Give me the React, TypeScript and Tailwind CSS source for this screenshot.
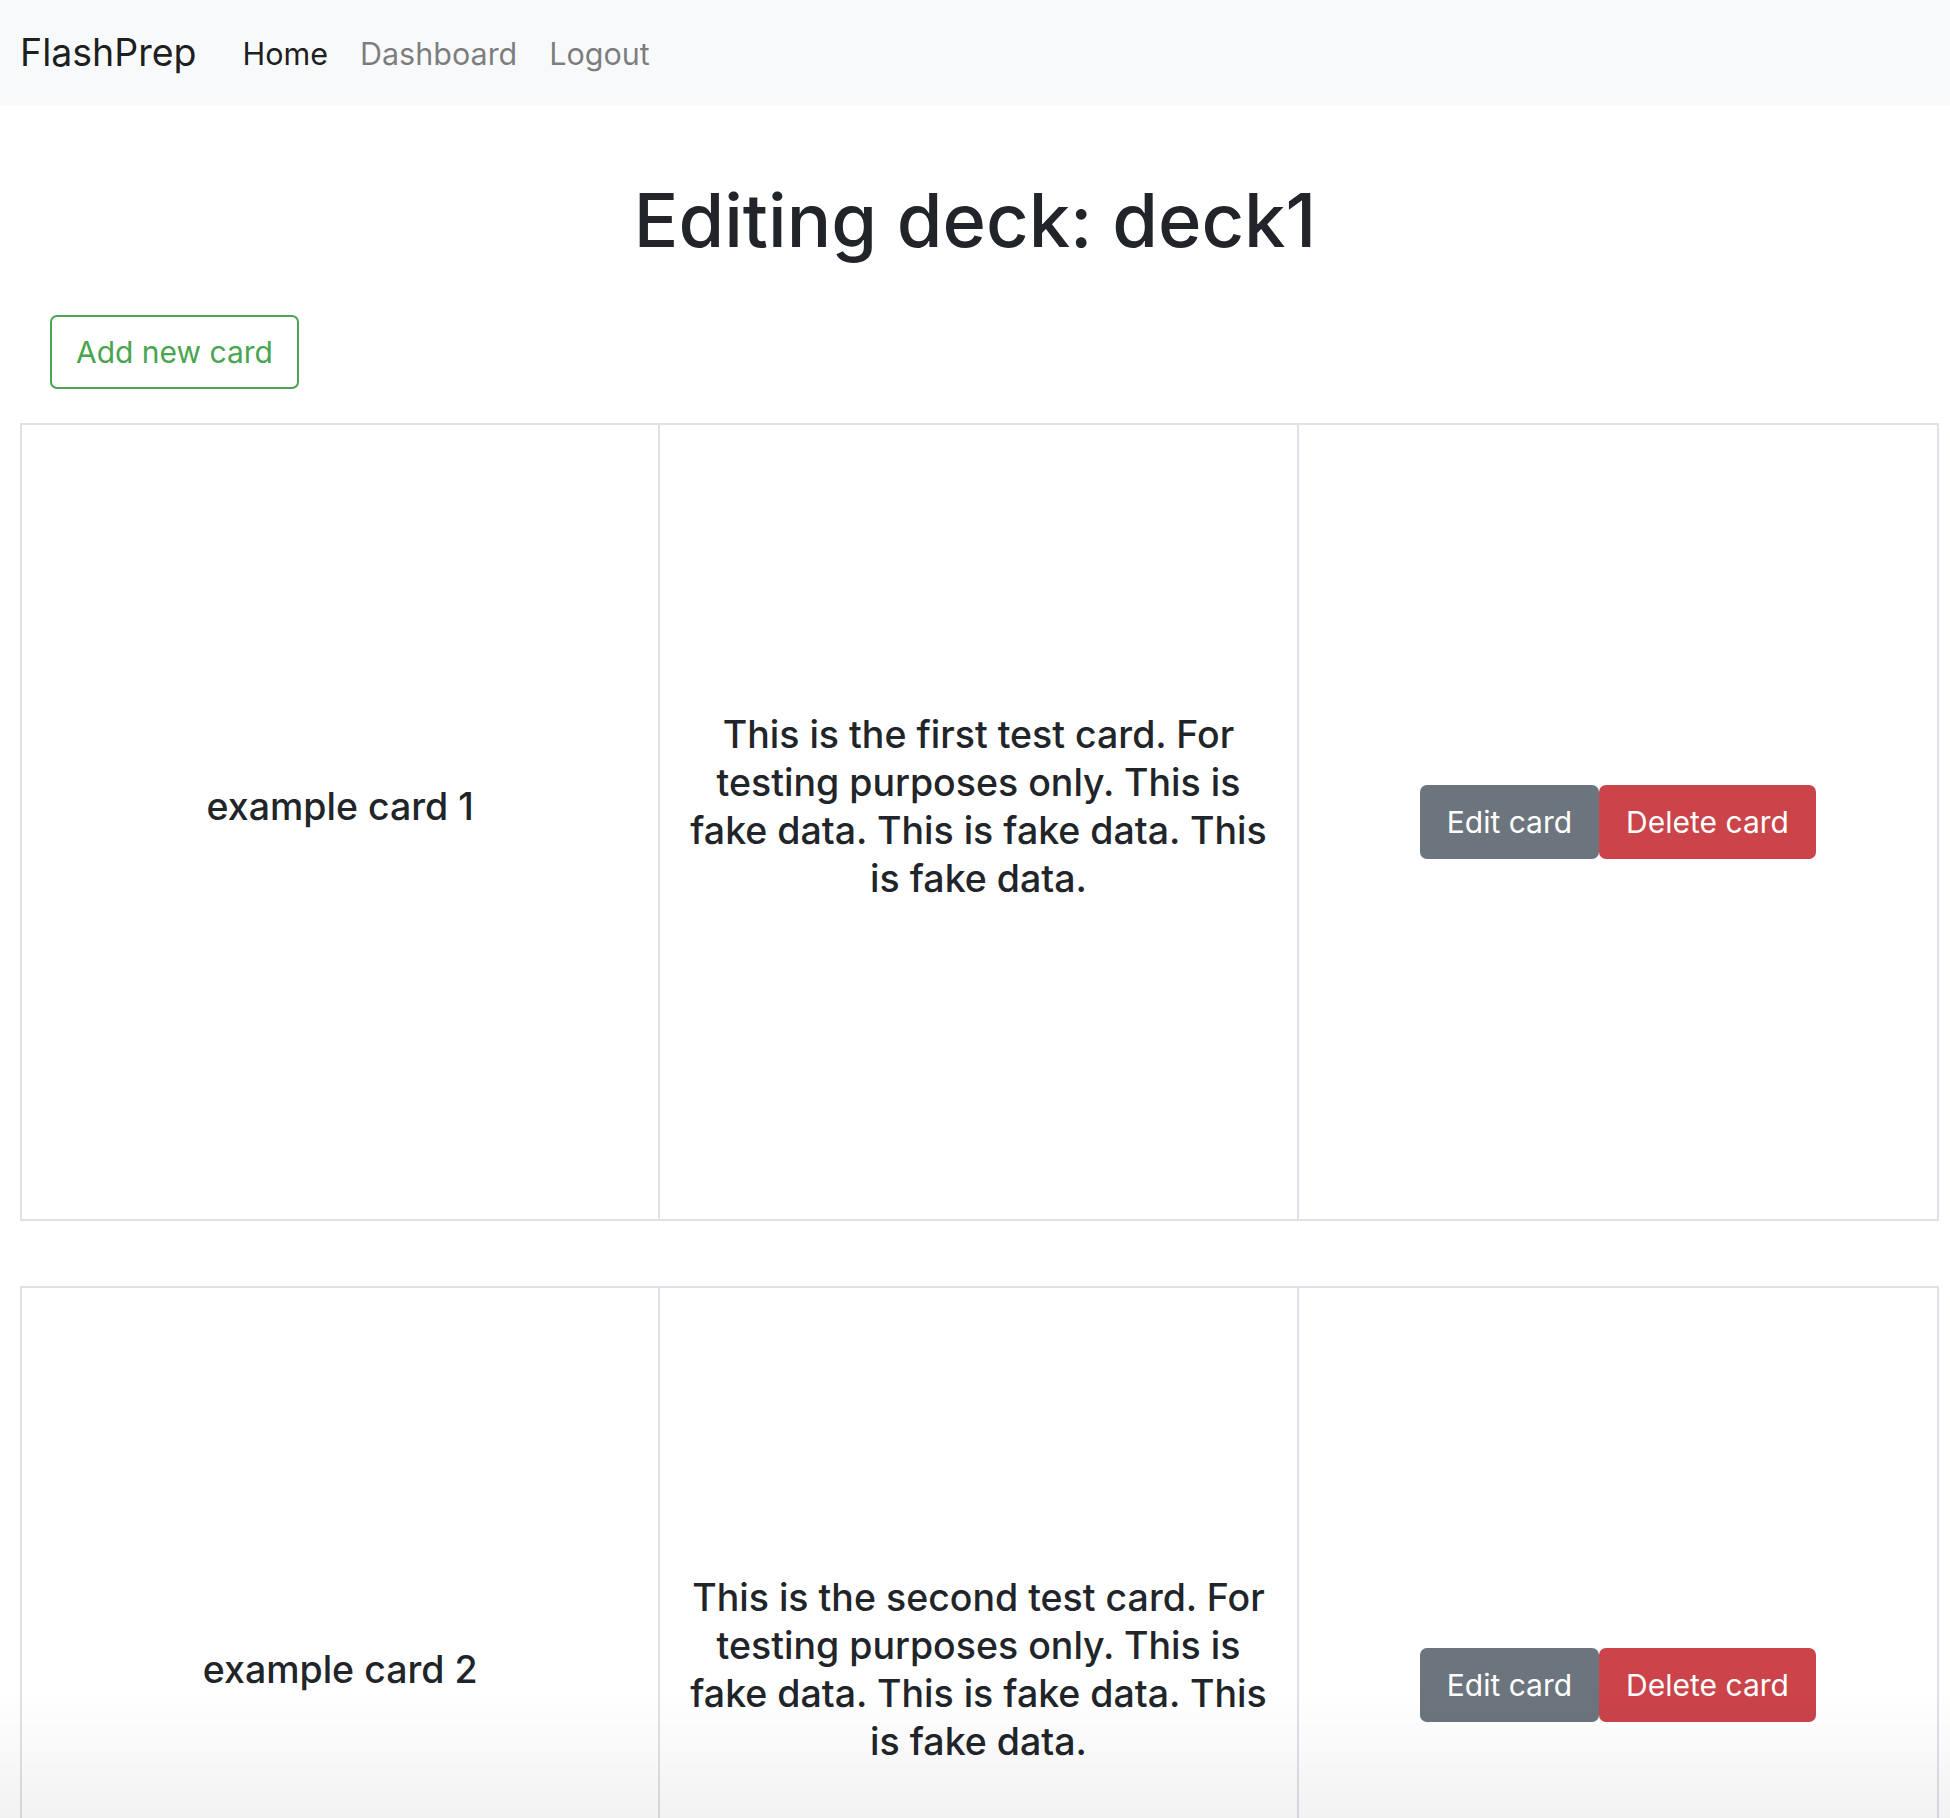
const cards = [
  {
    id: 1,
    front: "example card 1",
    back: "This is the first test card. For testing purposes only. This is fake data. This is fake data. This is fake data.",
  },
  {
    id: 2,
    front: "example card 2",
    back: "This is the second test card. For testing purposes only. This is fake data. This is fake data. This is fake data.",
  },
];

export default function App() {
  return (
    <div className="relative min-h-screen bg-white font-['Inter',_'Liberation_Sans',_sans-serif] text-[#212529]">
      <nav className="flex items-center h-[106px] bg-[#f8f9fa] px-[20px]">
        <span className="text-[37.5px] leading-[56px] text-black/90 mr-[30px]">FlashPrep</span>
        <a className="text-[30.5px] leading-[45px] px-[16px] text-black/90">Home</a>
        <a className="text-[30.5px] leading-[45px] px-[16px] text-black/50">Dashboard</a>
        <a className="text-[30.5px] leading-[45px] px-[16px] text-black/50">Logout</a>
      </nav>

      <h1 className="mt-[69px] mb-[50px] text-center text-[74px] leading-[90px] font-medium">
        Editing deck: deck1
      </h1>

      <div className="pl-[50px]">
        <button className="h-[74px] px-[24px] border-2 border-[#4aa550] rounded-[7px] text-[30px] text-[#4aa550]">
          Add new card
        </button>
      </div>

      <div className="mt-[34px] pl-[20px] pr-[11px] flex flex-col gap-[65px]">
        {cards.map((card) => (
          <div
            key={card.id}
            className="grid grid-cols-3 h-[798px] border-2 border-[#dee2e6] divide-x-2 divide-[#dee2e6]"
          >
            <div className="flex items-center justify-center px-[22px] text-center">
              <h5 className="mb-[30px] text-[37.5px] leading-[48px] font-medium">{card.front}</h5>
            </div>
            <div className="flex items-center justify-center px-[22px] text-center">
              <h5 className="mb-[30px] text-[37.5px] leading-[48px] font-medium">{card.back}</h5>
            </div>
            <div className="flex items-center justify-center px-[22px]">
              <button className="h-[74px] px-[27px] bg-[#6c757d] rounded-[7px] text-[30px] text-white">
                Edit card
              </button>
              <button className="h-[74px] px-[27px] bg-[#ca444a] rounded-[7px] text-[30px] text-white">
                Delete card
              </button>
            </div>
          </div>
        ))}
      </div>

      <div className="pointer-events-none fixed inset-x-0 bottom-0 h-[130px] bg-gradient-to-b from-transparent to-black/5" />
    </div>
  );
}
